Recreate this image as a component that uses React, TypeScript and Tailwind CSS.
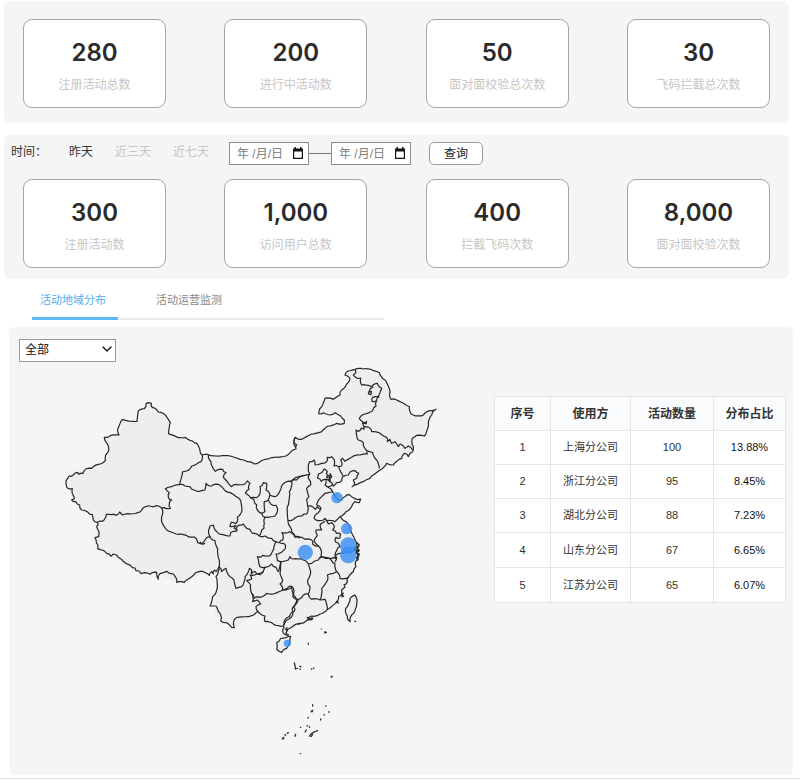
import { useState } from 'react';
import { ChevronDown } from 'lucide-react';

type Stat = { label: string; value: number };

const totals: Stat[] = [
  { label: '注册活动总数', value: 280 },
  { label: '进行中活动数', value: 200 },
  { label: '面对面校验总次数', value: 50 },
  { label: '飞码拦截总次数', value: 30 },
];

const periodStats: Stat[] = [
  { label: '注册活动数', value: 300 },
  { label: '访问用户总数', value: 1000 },
  { label: '拦截飞码次数', value: 400 },
  { label: '面对面校验次数', value: 8000 },
];

const ranges = ['昨天', '近三天', '近七天'];
const tabs = ['活动地域分布', '活动运营监测'];

const rows = [
  { name: '上海分公司', count: 100, share: '13.88%' },
  { name: '浙江分公司', count: 95, share: '8.45%' },
  { name: '湖北分公司', count: 88, share: '7.23%' },
  { name: '山东分公司', count: 67, share: '6.65%' },
  { name: '江苏分公司', count: 65, share: '6.07%' },
];

// Border lines, grouped by area. Each area has its own origin on the map.
const areas = [
  {
    // 新疆 / 西藏
    origin: 'translate(0 90)',
    lines: [
      '128,397 115,390 112,374 98,366 80,360 74,345 62,335 50,330 58,326 56,318 52,296 36,293 33,272 42,258 55,255 68,247 72,253 84,250 92,237 110,235 130,223 151,212 152,195 161,183 156,160 148,142 168,136 192,135 188,125 203,88 215,92 246,94 250,62 268,56 273,41 289,40 292,52 310,66 330,74 346,98 341,132 362,139 392,142 412,153 425,160 435,182 442,195',
      '128,397 142,394 154,373 170,374 182,376 194,366 202,375 220,371 248,368 262,356 285,348 304,347 320,354 334,356 346,355 343,340 350,330 340,322 343,308 331,296 350,290 372,284 382,246 395,243 410,228 425,222 438,215 442,195',
      '320,354 322,375 322,400 335,420 370,433 400,440 418,441 428,458 435,460 450,460',
      '128,397 125,410 132,425 131,440 120,443 124,458 128,476 142,480 155,490 168,499 175,492 190,502 205,514 220,523 232,533 240,534 243,542 252,543 258,551 268,548 285,553 305,547 310,568 316,550 335,544 355,552 362,562 365,577 388,577 400,567 420,550 435,544 450,548',
    ],
  },
  {
    // 甘肃 / 青海 / 四川 / 云南 / 贵州 / 广西
    origin: 'translate(285 210)',
    lines: [
      '157,75 180,76 210,78 240,78 270,88 292,95 313,102 330,95 355,87 385,82 408,78 420,68 438,57 440,45 432,38 436,22',
      '175,76 183,95 186,108 196,124 218,118 228,128 220,142 232,155 245,170 258,163 285,162 292,153 300,160 297,178 286,190 302,203 318,203 328,195 330,170 340,158 350,160 348,180 360,195 375,200 385,192 395,168 410,155 425,155',
      '302,203 312,210 320,225 322,240 335,250 345,245 343,215 355,210 360,195',
      '355,210 362,222 378,226 382,245 375,258 345,262 343,280 342,295 335,300 328,318 308,310 300,298 285,290 280,282 268,285 258,300',
      '335,250 345,262',
      '87,164 105,168 120,170 132,180 155,182 165,180 168,160 185,168 205,163 222,178 240,188 258,200 272,212 276,240 262,262 258,280 245,276 240,290 258,286 252,294 262,300 250,304 242,308 240,318 220,314 200,305 190,285 180,288 176,300 180,320 165,330 155,341 150,336',
      '180,320 195,332 203,355 206,385 207,410',
      '165,428 178,436 185,425 190,432 194,420 198,425 207,410',
      '207,410 198,440 200,480 188,500 180,528 198,528 205,545 212,555 212,572 230,578 245,592 253,593 252,570 262,562 290,560 315,552 325,545',
      '207,410 215,425 228,415 240,440 252,450 258,475 275,470 285,440 298,415 305,420 304,432 315,425 330,434 340,425',
      '328,318 345,318 365,325 378,335 372,350 358,378 340,376 322,380 326,395 330,410 345,412 340,425 320,432 300,435 305,447 290,452 302,465 305,490 312,505 330,502 350,490 370,492 398,480',
      '378,335 398,340 407,348 400,362 378,372 382,392 392,395 385,425 378,412 365,402 345,412',
      '388,337 398,330 396,308 420,305',
      '425,155 418,185 412,230 414,270 420,290 425,305 435,318 450,325',
      '392,395 390,430 398,450 390,462 398,480 425,472 430,495 440,508',
      '305,490 308,515 322,510 332,522 318,530 325,545 345,558 345,575 370,582 400,588 402,575 418,560 428,545 430,530 440,508',
    ],
  },
  {
    // 内蒙古 / 东北 / 河北
    origin: 'translate(705 0)',
    lines: [
      '18,262 12,245 16,232 35,238 65,222 95,215 115,198 140,190 163,190 163,180 152,168 135,158 120,165 100,158 86,161 88,150 95,140 105,115 130,118 150,105 155,90 170,72 180,55 165,45 175,33 195,28 220,27 250,32 268,38 285,60 300,95 303,118 320,120 340,130 358,140 360,155 370,165 400,165 420,152 438,148 425,165 415,190 403,228 380,226 367,235 370,260 368,275 355,290 345,280 335,295 310,315 290,310 270,330 250,345 240,355 220,365 200,374 186,380 194,370 190,360 200,355 206,340 195,332 180,336 175,345 160,350',
      '195,28 198,38 190,45 198,53 212,54 215,75 245,80 262,70 275,85 265,110 260,122 258,138 248,152 225,162 208,175 218,185 222,200',
      '236,97 244,94 243,104 235,102 238,92 250,80',
      '218,190 230,184 228,192 220,186',
      '268,112 248,112 246,124 258,122',
      '237,202 245,215 270,220 290,232 292,245 300,238 305,250 315,245 325,260 330,252 345,265 355,258 368,270',
      '196,210 206,214 214,204 222,208 222,200 237,202',
      '200,210 205,240 220,248 225,265 230,272 248,278 260,300 268,325',
      '230,275 232,282 210,285 185,292 165,304 158,295 152,300 155,318 146,320 155,340 160,350',
      '60,342 55,325 60,305 72,300 75,315 95,310 112,302 112,292 125,290 132,298 132,318 145,320',
      '158,350 155,362 140,368 130,378 126,372',
      '0,365 20,360 35,348 60,342',
    ],
  },
  {
    // 华北 / 华东 / 湖北
    origin: 'translate(555 270)',
    lines: [
      '155,95 168,82 192,76',
      '210,72 205,85 212,105 200,115 202,125 207,140 200,150 203,168 200,192 185,198 165,204 144,212',
      '203,168 220,172 226,178 232,170 243,178',
      '235,72 232,84 244,94 255,88 270,95 272,75 262,76 262,64 252,57 247,66 235,72',
      '262,76 260,84 270,80 268,88 258,90',
      '270,70 275,80 270,95 278,105 262,110 255,105 258,92',
      '262,110 272,116 278,125 255,130 240,145 230,165 243,175 235,188 222,205 240,212 255,205 260,213 285,215 300,200 318,185 335,170 345,155 358,158 362,147 345,146 335,140 328,134 315,140 305,150 295,150 278,125',
      '302,200 318,215 330,240 345,270 350,290 340,294 350,298',
      '255,205 265,222 275,218 283,232 278,240 290,250 302,252 300,264 288,262 286,275 295,280 300,290 290,302 285,315 287,325 275,325 255,325 243,320',
      '255,215 240,225 245,240 228,240 232,256 222,272 235,288 243,300 240,325',
      '150,245 155,250 165,262 185,262 195,268 215,270 218,282 235,288',
      '285,320 300,310 318,304 330,308 345,300 352,305',
    ],
  },
  {
    // 华南 / 海南 / 台湾
    origin: 'translate(555 540)',
    lines: [
      '122,65 145,60 150,50 160,57 175,57 190,60 205,72 212,95 203,120 210,140 205,162 190,165 175,178 158,170 160,145 150,138 140,146 125,150',
      '205,72 215,70 235,60 240,52 255,52 275,62 285,70 290,95 280,100 262,105 260,125 245,145 240,180',
      '205,162 215,178 240,180 255,178 262,208',
      '285,65 290,50',
      '290,95 300,115 325,112',
      '358,18 350,25 357,30 348,38 358,42 352,50 355,58 348,62 348,80 340,95 325,112 322,125 312,135 315,142 305,150 308,165 296,168 290,185 262,208 240,222 215,228 205,235 185,250 160,258 142,268 138,285 130,280 132,262 130,258',
      '175,178 160,200 164,212 158,225 140,240 130,258',
      '330,175 345,165 350,175 347,205 335,225 330,245 322,228 317,205 330,175',
      '122,295 140,292 152,290 150,305 140,325 125,337 110,328 110,308 122,295',
    ],
  },
];

// Denser strokes for harbours and small islands
const coast = [
  'M905 548l8 6-7 8 6 10-8 6 8 10-6 8',
  'M912 572l-8 8 8 4-8 10 5 8',
  'M866 698l-8 6 8 4-6 4M850 722l-6 4 8 4',
  'M755 772l14 4-10 4 12-1-8-6M770 770l4 8M729 793l8-2',
  'M697 802l-6 6 7 2-4 6 2 10 6-2',
  'M810 815l4 2-5 2zM798 806l2 2M760 848l0 6M898 783l5 2',
];

const islands = [
  'M718 909l3 12 0 6M723 926l4-1M734 919l4 1M735 927l1 1M769 927l1 1M775 925l2-1',
  'M827 949l6 1-3 1z',
  'M773 1034l0 4M773 1050l-4 5 3 0zM812 1038l1 0M821 1056l2 0M808 1064l-1 1M797 1077l0 3M760 1072l-1 2',
  'M700 1118l-3 2M690 1124l2 2M687 1132l-6 5 5-1M722 1123l-2 6M736 1102l1 0',
  'M756 1097l2 1M763 1101l1 1M754 1110l-4 6M788 1112l-6 2-7 3-7 5-4 6 5 1 4-6M736 1181l1 0',
];

const sites = [
  { name: '湖北', cx: 751, cy: 577, r: 23 },
  { name: '上海', cx: 880, cy: 557, r: 25 },
  { name: '浙江', cx: 880, cy: 585, r: 25 },
  { name: '江苏', cx: 875, cy: 506, r: 17 },
  { name: '山东', cx: 846, cy: 413, r: 17 },
  { name: '海南', cx: 697, cy: 850, r: 11 },
];

// Splits long segments and nudges the new points, so borders look natural.
function jag(points: string) {
  const pts = points.split(' ').map((p) => p.split(',').map(Number));
  const out: string[] = [];
  pts.forEach(([x, y], i) => {
    out.push(`${x},${y}`);
    const next = pts[i + 1];
    if (!next) return;
    const dx = next[0] - x;
    const dy = next[1] - y;
    const len = Math.hypot(dx, dy);
    const steps = Math.floor(len / 6);
    for (let k = 1; k < steps; k++) {
      const off = Math.sin(x * 12.9 + y * 78.2 + k * 37.7) * 2.6;
      const t = k / steps;
      out.push(`${(x + dx * t - (dy / len) * off).toFixed(1)},${(y + dy * t + (dx / len) * off).toFixed(1)}`);
    }
  });
  return out.join(' ');
}

function ChinaMap() {
  return (
    <svg viewBox="0 0 1170 1200" className="w-full" role="img" aria-label="活动地域分布图">
      <path
        fill="#eeeeee"
        d="M128 487L112 464 74 435 50 420 52 386 33 362 68 337 151 302 161 273 148 232 192 225 203 178 246 184 273 131 289 130 346 188 341 222 412 243 442 285 555 298 598 312 693 288 725 255 721 232 770 222 820 198 868 190 840 158 791 161 810 115 855 105 885 55 870 45 900 28 973 38 1005 95 1008 118 1063 140 1075 165 1143 148 1108 228 1072 235 1073 275 975 330 891 380 911 340 865 350 833 395 850 420 880 420 917 417 855 470 900 540 907 570 903 620 867 675 817 748 740 790 693 825 685 798 630 785 610 755 538 803 480 765 485 690 492 620 450 638 388 667 365 667 300 640 250 636 168 589 128 566 120 533z"
      />
      <path fill="#eeeeee" d="M885 715L900 705 905 715 902 745 885 785 872 745zM677 835L707 830 705 845 680 877 665 868z" />
      <g fill="none" stroke="#262626" strokeWidth="3.6" strokeLinejoin="round">
        {areas.map((area) => (
          <g key={area.origin} transform={area.origin}>
            {area.lines.map((points) => (
              <polyline key={points} points={jag(points)} />
            ))}
          </g>
        ))}
        {coast.map((d) => (
          <path key={d} d={d} />
        ))}
      </g>
      <g fill="none" stroke="#333333" strokeWidth="4" strokeLinecap="round">
        {islands.map((d) => (
          <path key={d} d={d} />
        ))}
      </g>
      <g fill="#3c8ff5" fillOpacity="0.82">
        {sites.map((s) => (
          <circle key={s.name} cx={s.cx} cy={s.cy} r={s.r}>
            <title>{s.name}</title>
          </circle>
        ))}
      </g>
    </svg>
  );
}

function StatCards({ items }: { items: Stat[] }) {
  return (
    <div className="flex justify-between px-[19px]">
      {items.map((s) => (
        <div
          key={s.label}
          className="h-[89px] w-[143px] rounded-[9px] border border-[#a6a6a6] bg-white pt-[19px] text-center"
        >
          <div className="font-[Inter] text-2xl leading-7 font-semibold text-[#2b2b2b]">
            {s.value.toLocaleString('en-US')}
          </div>
          <div className="mt-[10px] text-xs leading-4 text-[#c6c6c6]">{s.label}</div>
        </div>
      ))}
    </div>
  );
}

function DateInput({ label }: { label: string }) {
  return (
    <div className="relative h-[23px] w-20">
      <input
        type="text"
        aria-label={label}
        placeholder="年 /月/日"
        className="h-full w-full border border-[#8c8c8c] bg-white pl-[7px] text-xs text-[#333] outline-none placeholder:text-[#808080]"
      />
      <svg viewBox="0 0 10 12" className="pointer-events-none absolute top-[5px] right-[6px] h-3 w-[10px]">
        <path d="M0 1.5h1.5V0H3v1.5h4V0h1.5v1.5H10V12H0zM1.2 4.4v6.4h7.6V4.4z" fill="#111" fillRule="evenodd" />
      </svg>
    </div>
  );
}

export default function App() {
  const [range, setRange] = useState(ranges[0]);
  const [tab, setTab] = useState(tabs[0]);

  return (
    <main className="border-b border-[#e2e2e2] bg-white pt-px pb-[3px] font-['Liberation_Sans','Noto_Sans_CJK_SC',sans-serif] text-[#333]">
      <section className="mr-[11px] ml-1 rounded-md bg-[#f5f5f5] pt-[18px] pb-[15px]">
        <StatCards items={totals} />
      </section>

      <section className="mt-3 mr-[11px] ml-1 rounded-md bg-[#f5f5f5] pt-[7px] pb-[11px]">
        <div className="mb-[14px] flex h-[23px] items-center pl-[7px] text-xs">
          <span className="w-[58px] pb-1">时间：</span>
          <div className="flex w-40 gap-[22px] pb-1">
            {ranges.map((r) => (
              <button
                key={r}
                type="button"
                onClick={() => setRange(r)}
                className={r === range ? 'text-[#333]' : 'text-[#c6c6c6]'}
              >
                {r}
              </button>
            ))}
          </div>
          <DateInput label="开始日期" />
          <div className="h-px w-[22px] bg-[#777]" />
          <DateInput label="结束日期" />
          <button
            type="button"
            className="ml-[18px] h-[23px] w-[54px] rounded-[5px] border border-[#999] bg-white text-xs text-[#222]"
          >
            查询
          </button>
        </div>
        <StatCards items={periodStats} />
      </section>

      <div role="tablist" className="ml-8 flex h-[41px] w-[352px] gap-7 border-b-2 border-[#ebebeb]">
        {tabs.map((t) => (
          <button
            key={t}
            type="button"
            role="tab"
            aria-selected={t === tab}
            onClick={() => setTab(t)}
            className={`-mb-[2px] h-[41px] w-[86px] border-b-3 pt-1 text-[11px] whitespace-nowrap ${
              t === tab ? 'border-[#5cbcf6] pr-1 text-[#4fb0f0]' : 'border-transparent text-[#888]'
            }`}
          >
            {t}
          </button>
        ))}
      </div>

      <section className="mt-[7px] mr-[7px] ml-[9px] flex items-start justify-between rounded-md bg-[#f5f5f5] pt-[10px] pr-[7px] pb-[15px] pl-[10px]">
        <div className="w-[426px]">
          <div className="relative h-[23px] w-[97px]">
            <select
              aria-label="地区"
              className="h-full w-full appearance-none border border-[#999] bg-white pb-px pl-[5px] text-xs text-[#111] outline-none"
            >
              <option>全部</option>
              {sites.map((s) => (
                <option key={s.name}>{s.name}</option>
              ))}
            </select>
            <ChevronDown
              strokeWidth={2}
              className="pointer-events-none absolute top-1 right-[1px] h-4 w-4 text-[#111]"
            />
          </div>
          <div className="pl-9">
            <ChinaMap />
          </div>
        </div>

        <table className="mt-[59px] w-[291px] table-fixed border-collapse bg-white text-center text-[11px]">
          <colgroup>
            <col className="w-[56px]" />
            <col className="w-[80px]" />
            <col className="w-[83px]" />
            <col className="w-[72px]" />
          </colgroup>
          <thead>
            <tr className="h-[34px] bg-[#f9fbfd] text-xs">
              {['序号', '使用方', '活动数量', '分布占比'].map((h) => (
                <th key={h} className="border border-[#e6e6e6] font-bold">
                  {h}
                </th>
              ))}
            </tr>
          </thead>
          <tbody>
            {rows.map((r, i) => (
              <tr key={r.name} className={i < 3 ? 'h-[34px]' : 'h-[35px]'}>
                <td className="border border-[#e6e6e6]">{i + 1}</td>
                <td className="border border-[#e6e6e6]">{r.name}</td>
                <td className="border border-[#e6e6e6]">{r.count}</td>
                <td className="border border-[#e6e6e6] text-[#111]">{r.share}</td>
              </tr>
            ))}
          </tbody>
        </table>
      </section>
    </main>
  );
}
